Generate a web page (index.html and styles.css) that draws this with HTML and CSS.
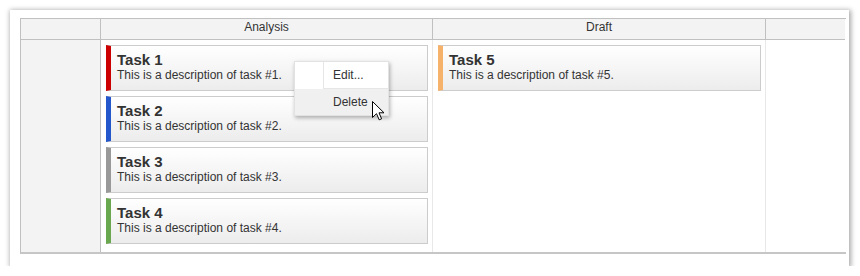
FILE: index.html
```html
<!DOCTYPE html>
<html lang="en">
<head>
    <meta charset="UTF-8">
    <title>Kanban</title>
    <link rel="stylesheet" href="styles.css">
</head>
<body>
    <div class="panel">
        <div class="board">
            <!-- header row -->
            <div class="row header">
                <div class="cell rowhead"></div>
                <div class="cell col">Analysis</div>
                <div class="cell col wide">Draft</div>
                <div class="cell last"></div>
            </div>
            <!-- swimlane -->
            <div class="row body">
                <div class="cell rowhead"></div>
                <div class="cell col">
                    <div class="card red">
                        <div class="title">Task 1</div>
                        <div class="desc">This is a description of task #1.</div>
                    </div>
                    <div class="card blue">
                        <div class="title">Task 2</div>
                        <div class="desc">This is a description of task #2.</div>
                    </div>
                    <div class="card gray">
                        <div class="title">Task 3</div>
                        <div class="desc">This is a description of task #3.</div>
                    </div>
                    <div class="card green">
                        <div class="title">Task 4</div>
                        <div class="desc">This is a description of task #4.</div>
                    </div>
                </div>
                <div class="cell col wide">
                    <div class="card orange">
                        <div class="title">Task 5</div>
                        <div class="desc">This is a description of task #5.</div>
                    </div>
                </div>
                <div class="cell last"></div>
            </div>
        </div>

        <!-- context menu -->
        <div class="menu">
            <div class="item"><span class="icon"></span><span class="text">Edit...</span></div>
            <div class="item hover"><span class="icon"></span><span class="text">Delete</span></div>
        </div>
        <svg class="cursor" width="13" height="20" viewBox="0 0 13 20">
            <path d="M0.5 0.5 L0.5 16.5 L4.5 12.7 L7.2 18.8 L9.6 17.8 L7 11.8 L12 11.8 Z" fill="#fff" stroke="#000" stroke-width="1" stroke-linejoin="miter"/>
        </svg>
    </div>
</body>
</html>
```

FILE: styles.css
```css
body {
    margin: 0;
    background-color: #fff;
    font-family: "Liberation Sans", Arial, sans-serif;
    color: #333;
}

.panel {
    position: relative;
    margin: 10px 0 0 10px;
    width: 825px;
    height: 248px;
    box-sizing: content-box;
    padding: 8px 4px 0 10px;
    background-color: #fff;
    box-shadow: 1px 1px 5px 1px rgba(0, 0, 0, 0.35);
}

.board {
    width: 825px;
    border-top: 1px solid #c0c0c0;
    border-left: 1px solid #c0c0c0;
    border-bottom: 2px solid #c6c6c6;
}

.row {
    display: flex;
}

.cell {
    box-sizing: border-box;
}
.rowhead { width: 80px; }
.col { width: 332px; }
.col.wide { width: 333px; }
.last { width: 79px; }

/* header */
.header .cell {
    height: 21px;
    padding-top: 1px;
    line-height: 14px;
    font-size: 12px;
    text-align: center;
    background-color: #f3f3f3;
    border-bottom: 1px solid #c0c0c0;
    border-right: 1px solid #c0c0c0;
}
.header .last {
    border-right: none;
}

/* body */
.body .cell {
    height: 212px;
}
.body .rowhead {
    background-color: #f3f3f3;
    border-right: 1px solid #c0c0c0;
}
.body .col {
    border-right: 1px solid #e8e8e8;
    padding: 5px 4px 0 5px;
}

.card {
    height: 46px;
    box-sizing: border-box;
    margin-bottom: 5px;
    padding: 5px 0 0 6px;
    border: 1px solid #cccccc;
    border-left: 5px solid #999;
    background: linear-gradient(to bottom, #ffffff, #ececec);
}
.card.red { border-left-color: #cc0000; }
.card.blue { border-left-color: #2456cc; }
.card.gray { border-left-color: #999999; }
.card.green { border-left-color: #6aa84f; }
.card.orange { border-left-color: #f6b26b; }

.title {
    font-size: 15px;
    font-weight: bold;
    line-height: 17px;
}
.desc {
    font-size: 12px;
    line-height: 14px;
}

/* context menu */
.menu {
    position: absolute;
    left: 284px;
    top: 51px;
    width: 93px;
    background-color: #fff;
    border: 1px solid #e2e2e2;
    box-shadow: 1px 2px 4px rgba(0, 0, 0, 0.3);
    font-size: 12px;
}
.item {
    display: flex;
    height: 27px;
    line-height: 26px;
}
.item .icon {
    width: 28px;
}
.item .text {
    flex: 1;
    padding-left: 9px;
    border-left: 1px solid #e6e6e6;
    border-bottom: 1px solid #e6e6e6;
}
.item.hover {
    height: 26px;
    background-color: #f0f0f0;
}
.item.hover .text {
    border-left-color: transparent;
    border-bottom: none;
}

.cursor {
    position: absolute;
    left: 362px;
    top: 91px;
}
```
